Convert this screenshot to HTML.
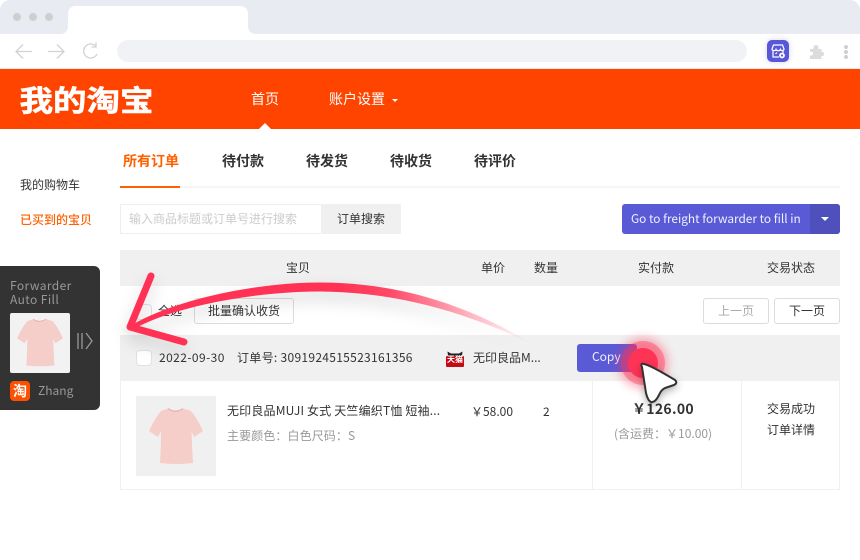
<!DOCTYPE html>
<html><head><meta charset="utf-8"><style>
*{box-sizing:border-box}
html,body{margin:0;padding:0;width:860px;height:560px;overflow:hidden;background:#fff}
body{font-family:"Noto Sans CJK SC","Liberation Sans",sans-serif;color:#333;font-size:12px;position:relative}
.a{position:absolute;white-space:nowrap;line-height:1}
.b{position:absolute}
.c{text-align:center}
</style></head><body>
<!-- browser chrome -->
<div class="b" style="left:0;top:0;width:860px;height:34px;background:#e8ebf1;border-radius:10px 10px 0 0"></div>
<div class="b" style="left:13px;top:13px;width:8px;height:8px;border-radius:50%;background:#cfcfcf"></div>
<div class="b" style="left:29px;top:13px;width:8px;height:8px;border-radius:50%;background:#cfcfcf"></div>
<div class="b" style="left:45px;top:13px;width:8px;height:8px;border-radius:50%;background:#cfcfcf"></div>
<svg class="b" style="left:60px;top:6px" width="196" height="28"><path d="M0 28C5 28 8 25 8 20V8C8 3 11 0 16 0H180C185 0 188 3 188 8V20C188 25 191 28 196 28Z" fill="#fff"/></svg>
<svg class="b" style="left:12px;top:40px" width="90" height="24" fill="none" stroke="#d2d2d2" stroke-width="1.3"><path d="M4 11.500H20M11 4.500L4 11.500L11 18.500"/><path d="M36 11.500H52M45 4.500L52 11.500L45 18.500"/><path d="M84 6.500A7 7 0 1 0 85 14M84 2.500V7H79.500"/></svg>
<div class="b" style="left:117px;top:40px;width:630px;height:22px;border-radius:11px;background:#f0f2f5"></div>
<div class="b" style="left:767px;top:40px;width:22px;height:22px;border-radius:5px;background:#5858d6;box-shadow:0 0 6px rgba(88,88,214,.25)"></div>
<svg class="b" style="left:767px;top:40px" width="22" height="22" fill="none" stroke="#fff" stroke-width="1.200"><path d="M5 9L6.500 5H15.500L17 9C17 11 14 11 13.500 9.500C13 11 9.500 11 9 9.500C8.500 11 5 11 5 9ZM6 11V17H12M16 11V13"/><path d="M8.500 14L10 12.500"/><circle cx="15" cy="15.500" r="2" stroke-width="1.800"/></svg>
<svg class="b" style="left:809px;top:45px" width="15" height="14" fill="#dcdcdc"><path d="M1 4H4.500C4 1 6 0 7 0S10 1 9.500 4H12.500V7C15 6.500 15 8.500 15 9S15 11.500 12.500 11V14H1V10.500C3.500 11 4 9.500 4 8.500S3 6 1 7Z"/></svg>
<div class="b" style="left:844px;top:45px;width:4px;height:4px;border-radius:50%;background:#cfcfcf"></div>
<div class="b" style="left:844px;top:50px;width:4px;height:4px;border-radius:50%;background:#cfcfcf"></div>
<div class="b" style="left:844px;top:55px;width:4px;height:4px;border-radius:50%;background:#cfcfcf"></div>
<div class="b" style="left:0;top:68px;width:860px;height:1px;background:#ececec"></div>
<!-- orange header -->
<div class="b" style="left:0;top:69px;width:860px;height:60px;background:#ff4400"></div>
<div class="a" style="left:19.500px;top:82px;font-size:33.500px;font-weight:700;color:#fff;-webkit-text-stroke:.6px #fff;transform:scaleY(.86);transform-origin:0 50%">我的淘宝</div>
<div class="a" style="left:251px;top:92px;font-size:14px;color:#fff">首页</div>
<div class="a" style="left:329px;top:92px;font-size:14px;color:#fff">账户设置</div>
<div class="b" style="left:392px;top:99px;border:3px solid transparent;border-top-color:#fff;border-bottom:0"></div>
<div class="b" style="left:259px;top:123px;border:6px solid transparent;border-bottom-color:#fff;border-top:0"></div>
<!-- sidebar -->
<div class="a" style="left:20px;top:179px;color:#333">我的购物车</div>
<div class="a" style="left:20px;top:214px;color:#ff6000;font-weight:500">已买到的宝贝</div>
<!-- tabs -->
<div class="b" style="left:120px;top:186px;width:720px;height:2px;background:#f6f6f6"></div>
<div class="b" style="left:120px;top:186px;width:60px;height:2px;background:#ff6000"></div>
<div class="a" style="left:123px;top:154px;font-size:14px;font-weight:700;color:#ff6000">所有订单</div>
<div class="a" style="left:222px;top:154px;font-size:14px;font-weight:700">待付款</div>
<div class="a" style="left:306px;top:154px;font-size:14px;font-weight:700">待发货</div>
<div class="a" style="left:390px;top:154px;font-size:14px;font-weight:700">待收货</div>
<div class="a" style="left:474px;top:154px;font-size:14px;font-weight:700">待评价</div>
<!-- search -->
<div class="b" style="left:120px;top:204px;width:202px;height:30px;border:1px solid #eee;border-right:0"></div>
<div class="a" style="left:129px;top:213px;color:#ccc">输入商品标题或订单号进行搜索</div>
<div class="b" style="left:321px;top:204px;width:80px;height:30px;background:#f0f0f0"></div>
<div class="a" style="left:337px;top:213px;color:#333">订单搜索</div>
<div class="b" style="left:622px;top:204px;width:218px;height:30px;background:#5a5ad6;border-radius:3px"></div>
<div class="b" style="left:810px;top:204px;width:30px;height:30px;background:#5050bc;border-radius:0 3px 3px 0"></div>
<div class="a" style="left:631px;top:213px;color:#f0f0ff;font-size:11.850px">Go to freight forwarder to fill in</div>
<div class="b" style="left:821px;top:217px;border:4px solid transparent;border-top:4px solid #fff;border-bottom:0"></div>
<!-- table head -->
<div class="b" style="left:120px;top:250px;width:720px;height:36px;background:#f0f0f0"></div>
<div class="a" style="left:286px;top:262px">宝贝</div>
<div class="a" style="left:481px;top:262px">单价</div>
<div class="a" style="left:534px;top:262px">数量</div>
<div class="a" style="left:638px;top:262px">实付款</div>
<div class="a" style="left:767px;top:262px">交易状态</div>
<!-- batch row -->
<div class="b" style="left:136px;top:304px;width:16px;height:16px;border:1.500px solid #e2e2e2;border-radius:4px"></div>
<div class="a" style="left:158px;top:305px">全选</div>
<div class="b" style="left:194px;top:298px;width:100px;height:26px;border:1px solid #dcdcdc;border-radius:3px"></div>
<div class="a" style="left:208px;top:305px">批量确认收货</div>
<div class="b" style="left:703px;top:298px;width:66px;height:26px;border:1px solid #dcdcdc;border-radius:3px"></div>
<div class="a" style="left:718px;top:305px;color:#aaa">上一页</div>
<div class="b" style="left:774px;top:298px;width:66px;height:26px;border:1px solid #dcdcdc;border-radius:3px"></div>
<div class="a" style="left:789px;top:305px">下一页</div>
<!-- order head -->
<div class="b" style="left:120px;top:335px;width:720px;height:46px;background:#f0f0f0"></div>
<div class="b" style="left:136px;top:350px;width:16px;height:16px;background:#fff;border:1.500px solid #e0e0e0;border-radius:4px"></div>
<div class="a" style="left:159px;top:352px;letter-spacing:.42px">2022-09-30</div>
<div class="a" style="left:237px;top:352px;letter-spacing:.3px">订单号: 3091924515523161356</div>
<svg class="b" style="left:446px;top:351px" width="18" height="16"><path d="M2 5L1.500 0.500L5 2.500H13L16.500 0.500L16 5Z" fill="#222"/><rect x="0" y="5" width="18" height="11" rx="1" fill="#c40b14"/></svg>
<div class="a" style="left:446px;top:356px;width:18px;font-size:8px;color:#fff;text-align:center;font-weight:700">天猫</div>
<div class="a" style="left:473px;top:352px">无印良品M...</div>
<div class="b" style="left:577px;top:344px;width:60px;height:28px;background:#5a5ad6;border-radius:3px"></div>
<div class="a" style="left:592px;top:351px;color:#f0f0ff;font-size:12px">Copy</div>
<!-- order body -->
<div class="b" style="left:120px;top:381px;width:720px;height:109px;border:1px solid #f0f0f0;border-top:0"></div>
<div class="b" style="left:592px;top:381px;width:1px;height:108px;background:#f0f0f0"></div>
<div class="b" style="left:741px;top:381px;width:1px;height:108px;background:#f0f0f0"></div>
<div class="b" style="left:136px;top:396px;width:80px;height:80px;background:#f0f0f0"></div>
<svg class="b" style="left:136px;top:396px" width="80" height="80"><path d="M32 12.500Q39 16 47 12.500L55 15Q61 22 67 35L58 41L55.500 35Q56 50 57 67Q40 69 24 67Q25 50 25 35L22 41L13 35Q19 22 25 15Z" fill="#f5cdc9"/><path d="M32 12.500Q39 18 47 12.500" fill="none" stroke="#eab4b0" stroke-width="1.200"/></svg>
<div class="a" style="left:227px;top:405px;letter-spacing:.18px">无印良品MUJI 女式 天竺编织T恤 短袖...</div>
<div class="a" style="left:227px;top:430px;color:#999;letter-spacing:.1px">主要颜色：白色尺码：S</div>
<div class="a" style="left:471px;top:406px">￥58.00</div>
<div class="a" style="left:543px;top:406px">2</div>
<div class="a" style="left:632px;top:402px;font-size:14px;font-weight:700;letter-spacing:.3px">￥126.00</div>
<div class="a" style="left:614px;top:428px;color:#999">(含运费：￥10.00)</div>
<div class="a" style="left:767px;top:403px">交易成功</div>
<div class="a" style="left:767px;top:424px">订单详情</div>
<!-- dark panel -->
<div class="b" style="left:0;top:266px;width:100px;height:144px;background:#333;border-radius:0 6px 6px 0"></div>
<div class="a" style="left:10px;top:280px;color:#999;letter-spacing:.4px">Forwarder</div>
<div class="a" style="left:10px;top:294px;color:#999;letter-spacing:.4px">Auto Fill</div>
<div class="b" style="left:10px;top:313px;width:60px;height:60px;background:#f2f2f2;border-radius:2px"></div>
<svg class="b" style="left:10px;top:313px" width="60" height="60"><g transform="translate(-4 -4.500) scale(.85)"><path d="M32 12.500Q39 16 47 12.500L55 15Q61 22 67 35L58 41L55.500 35Q56 50 57 67Q40 69 24 67Q25 50 25 35L22 41L13 35Q19 22 25 15Z" fill="#f5cdc9"/><path d="M32 12.500Q39 18 47 12.500" fill="none" stroke="#eab4b0" stroke-width="1.200"/></g></svg>
<svg class="b" style="left:76px;top:331px" width="18" height="20" fill="none" stroke="#999" stroke-width="1.300"><path d="M2 2V18M6 2V18M10 2L16 10L10 18"/></svg>
<div class="b" style="left:10px;top:381px;width:20px;height:20px;background:#ff5000;border-radius:4px"></div>
<div class="a c" style="left:10px;top:384px;width:20px;font-size:14px;color:#fff;font-weight:700">淘</div>
<div class="a" style="left:38px;top:385px;color:#999">Zhang</div>
<!-- arrow -->
<svg class="b" style="left:0;top:0" width="860" height="560" fill="none">
<defs>
<linearGradient id="g" gradientUnits="userSpaceOnUse" x1="530" y1="340" x2="130" y2="325"><stop offset="0" stop-color="#ff3355" stop-opacity="0"/><stop offset=".19" stop-color="#ff3355" stop-opacity=".45"/><stop offset=".36" stop-color="#ff3355" stop-opacity=".9"/><stop offset=".48" stop-color="#ff3355"/><stop offset="1" stop-color="#ff3355"/></linearGradient>
<filter id="s" x="-20%" y="-40%" width="140%" height="200%"><feDropShadow dx="0" dy="8" stdDeviation="8" flood-color="#000" flood-opacity=".16"/></filter>
<filter id="bl" x="-50%" y="-50%" width="200%" height="200%"><feGaussianBlur stdDeviation="5"/></filter>
<filter id="s2" x="-50%" y="-50%" width="200%" height="200%"><feDropShadow dx="0" dy="3" stdDeviation="4" flood-color="#000" flood-opacity=".3"/></filter>
</defs>
<g filter="url(#s)">
<path d="M132 325C170 302 250 282.500 320 282.500C400 282.500 470 306 532 344C470 314 400 292 320 291.500C250 291.500 170 308 134 329Z" fill="url(#g)"/>
<path d="M151 276L130 327L184 342" stroke="#ff3355" stroke-width="7" stroke-linecap="round" stroke-linejoin="round"/>
</g>
<!-- click indicator -->
<circle cx="643" cy="363" r="25" fill="#ff3355" opacity=".4" filter="url(#bl)"/>
<circle cx="643" cy="363" r="22" fill="#ff3355" opacity=".38"/>
<circle cx="643" cy="363" r="15" fill="#ff3355"/>
<!-- cursor -->
<path d="M642 367Q640 363 644 364Q650 365 675 380Q678 383 674 385L665 388Q661 390 659 395Q655 403 651 402Q648 401 646 393Z" fill="#fff" stroke="#333" stroke-width="2" stroke-linejoin="round" filter="url(#s2)"/>
</svg>
</body></html>
